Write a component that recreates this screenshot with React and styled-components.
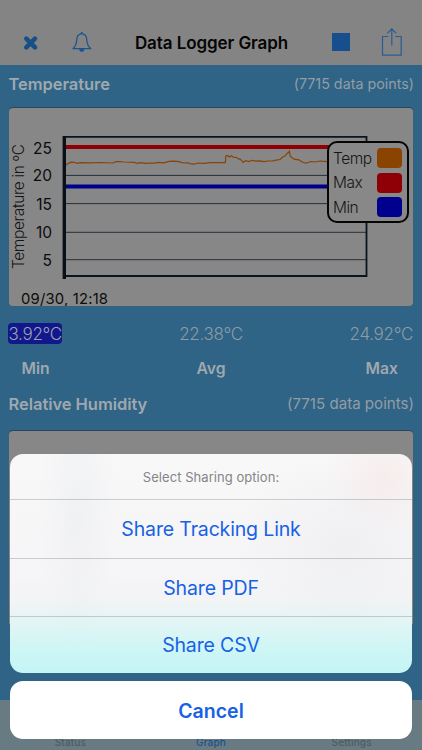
import React from "react";
import styled, { createGlobalStyle } from "styled-components";

const GlobalStyle = createGlobalStyle`
  * {
    box-sizing: border-box;
  }
  body {
    margin: 0;
    font-family: Inter, "Liberation Sans", sans-serif;
    font-feature-settings: "calt" 0;
  }
`;

const Screen = styled.div`
  position: relative;
  display: flex;
  flex-direction: column;
  width: 422px;
  height: 750px;
  overflow: hidden;
  background: #2f6486;
`;

const NavBar = styled.header`
  display: flex;
  align-items: flex-end;
  justify-content: space-between;
  height: 65px;
  padding: 0 19px 7px 22px;
  background: #848484;
`;

const NavGroup = styled.div`
  display: flex;
  align-items: center;
  gap: ${(props) => props.$gap};
  height: 30px;
`;

const NavTitle = styled.h1`
  margin: 0 2px 0 0;
  color: #050505;
  font-size: 17px;
  font-weight: 600;
  line-height: 30px;
  letter-spacing: -0.08px;
  white-space: nowrap;
`;

const StopButton = styled.div`
  width: 18px;
  height: 18px;
  margin-bottom: 2px;
  background: #164f8c;
`;

const Content = styled.main`
  flex: 1;
  padding: 0 8px;
`;

const SectionHeader = styled.div`
  display: flex;
  align-items: center;
  justify-content: space-between;
  height: ${(props) => props.$height};
  padding: 0 0 ${(props) => props.$bottom} 1px;
`;

const SectionTitle = styled.h2`
  margin: 0 0 0 -0.5px;
  color: #9fa8ae;
  font-size: 16.5px;
  font-weight: 600;
  letter-spacing: -0.05px;
`;

const PointCount = styled.span`
  margin-bottom: ${(props) => props.$lift || "0"};
  color: #929da4;
  font-size: ${(props) => props.$size};
`;

const Card = styled.div`
  position: relative;
  width: 406px;
  height: ${(props) => props.$height};
  border: 1px solid #376178;
  border-top-color: #29465a;
  border-radius: 5px;
  background: #878787;
`;

const ChartSvg = styled.svg`
  display: block;
`;

const Legend = styled.div`
  position: absolute;
  top: 33px;
  left: 318px;
  display: flex;
  flex-direction: column;
  justify-content: space-between;
  width: 82px;
  height: 82px;
  padding: 5px 5px 4px 4px;
  border: 2px solid #050505;
  border-radius: 10px;
  background: #888;
`;

const LegendRow = styled.div`
  display: flex;
  align-items: center;
  justify-content: space-between;
  height: 20px;
  color: #161616;
  font-size: 15.5px;
  font-weight: 300;
  letter-spacing: -0.5px;
`;

const Swatch = styled.span`
  width: 25px;
  height: 20px;
  border-radius: 4px;
  background: ${(props) => props.$color};
`;

const Stats = styled.div`
  display: flex;
  justify-content: space-between;
  padding-top: 16px;
`;

const Stat = styled.div`
  display: flex;
  flex-direction: column;
  align-items: ${(props) => props.$align};
  width: 100px;
`;

const StatValue = styled.span`
  height: 21px;
  padding: 0 ${(props) => (props.$marked ? "0.5px" : "1px")};
  border-radius: 4px;
  background: ${(props) => (props.$marked ? "#10188b" : "transparent")};
  color: ${(props) => (props.$marked ? "#a0a0b4" : "#8e9ba4")};
  font-size: 17px;
  font-weight: 350;
  line-height: 22px;
  letter-spacing: -0.3px;
`;

const StatLabel = styled.span`
  margin-top: 14px;
  padding: ${(props) => props.$padding || "0"};
  color: #9fa8ae;
  font-size: 15.7px;
  font-weight: 600;
  line-height: 22px;
`;

const TabBar = styled.nav`
  display: flex;
  align-items: flex-end;
  justify-content: space-around;
  height: 50px;
  padding-bottom: 1px;
  background: #687b83;
`;

const Tab = styled.span`
  width: 140px;
  color: ${(props) => (props.$active ? "#1d508a" : "#4d5b62")};
  font-size: 10px;
  font-weight: 500;
  line-height: 13px;
  letter-spacing: 0.15px;
  text-align: center;
`;

const Sheet = styled.div`
  position: absolute;
  right: 10.4px;
  bottom: 11px;
  left: 10.4px;
  display: flex;
  flex-direction: column;
  gap: 8px;
`;

const Options = styled.div`
  overflow: hidden;
  border-radius: 13px;
  background:
    radial-gradient(ellipse 60px 55px at 375px 22px, rgba(246, 218, 218, 0.35), transparent),
    radial-gradient(ellipse 110px 90px at 335px 90px, rgba(226, 228, 232, 0.35), transparent),
    radial-gradient(ellipse 40px 140px at 68px 60px, rgba(226, 230, 236, 0.35), transparent),
    linear-gradient(#f8f8f8 0, #f6f5f7 55%, #f2f4f5 67%, #e2f5f5 77%, #cdf6f5 90%, #c5f5f5 100%);
`;

const SheetTitle = styled.div`
  height: 45px;
  color: #858587;
  font-size: 13px;
  line-height: 46px;
  letter-spacing: 0.05px;
  text-align: center;
`;

const Option = styled.button`
  display: block;
  width: 100%;
  height: ${(props) => props.$height || "58px"};
  padding: 0;
  border: 0;
  border-top: 1px solid rgba(60, 80, 90, 0.25);
  background: transparent;
  color: #1761e6;
  font-family: inherit;
  font-size: 19.5px;
  line-height: ${(props) => props.$line || "56px"};
  letter-spacing: -0.15px;
`;

const Cancel = styled.button`
  height: 58px;
  padding: 0;
  border: 0;
  border-radius: 13px;
  background: #fff;
  color: #1761e6;
  font-family: inherit;
  font-size: 19.5px;
  font-weight: 600;
  line-height: 60px;
`;

const CloseIcon = () => (
  <svg width="17" height="30" viewBox="22 28 17 30">
    <path d="M26.3 38.6 L35 47.4 M35 38.6 L26.3 47.4" stroke="#194f88" strokeWidth="4.6" strokeLinecap="round" />
  </svg>
);

const BellIcon = () => (
  <svg width="22" height="30" viewBox="71 28 22 30" fill="none" stroke="#1c5490" strokeWidth="1.3">
    <path d="M73 48.6 H90.7 C87.5 46 86.9 43.3 86.7 39.5 C86.5 36 84.5 33.8 81.8 33.8 C79 33.8 77 36 76.8 39.5 C76.6 43.3 76.1 46 73 48.6 Z" strokeLinejoin="round" />
    <path d="M80.9 33.6 C81 32.2 82.7 32.2 82.8 33.6" />
    <path d="M79.2 49 H84.4 C84.4 52.8 79.2 52.8 79.2 49 Z" fill="#1c5490" stroke="none" />
  </svg>
);

const ShareIcon = () => (
  <svg width="22" height="30" viewBox="381 28 22 30" fill="none" stroke="#2a5b92" strokeWidth="1.2">
    <path d="M388.2 36.5 H382.5 V55.2 H401.2 V36.5 H395.2" />
    <path d="M391.8 45.4 V29 M387.4 33.3 L391.8 28.8 L396.2 33.3" />
  </svg>
);

const scale = [
  { label: "25", y: 147.7 },
  { label: "20", y: 175.4, line: true },
  { label: "15", y: 203.6, line: true },
  { label: "10", y: 232.3, line: true },
  { label: "5", y: 259.7, line: true },
];

const temperature =
  "66,165 68,163.5 71,162.2 74,162.3 77,163.3 80,162.7 90,162.8 100,162.5 113,163 116,161.7 120,161.5 124,162 134,162.3 137,163.3 141,162.6 145,163.3 150,163 155,163.2 158,162.4 164,162.8 169,161.4 174,161.2 179,161.7 183,163 188,162.8 190,163.6 194,164.2 198,163 204,163.3 210,162.6 225.4,162.6 225.8,156 227.5,155.5 229.5,157 231.5,155.7 233,157.2 236,157.3 238,158.7 240.5,159.3 243.3,162.4 245.5,160.7 249,161.5 252,160.3 256,161.2 260,160.8 264,161.7 268,161 273,160.8 276,160.2 280,159.5 283,156.8 285,156 287,153.5 288.3,152.6 289.3,151.2 290.3,156.3 294,159.2 299,159.8 302,162 306,163.2 311,161.5 315,162 320,161 327,161.7";

const TemperatureChart = () => (
  <ChartSvg width="404" height="198" viewBox="9 108 404 198">
    <text
      transform="translate(24 269) rotate(-90)"
      fontSize="15.5"
      fontWeight="300"
      fill="#151515"
      textLength="125"
    >
      Temperature in ºC
    </text>
    {scale.map(({ label, y, line }) => (
      <g key={label}>
        <text x="52" y={y + 6} fontSize="15.5" fill="#0c0c0c" textAnchor="end">
          {label}
        </text>
        {line && <path d={`M66 ${y}H366`} stroke="#25303a" strokeWidth="1" />}
      </g>
    ))}
    <path d="M66 136.8H366.5V276H66" fill="none" stroke="#0b151e" strokeWidth="1.8" />
    <path d="M64.3 136V279" stroke="#071016" strokeWidth="3.4" />
    <path d="M66 147H330" stroke="#8e0004" strokeWidth="4" />
    <path d="M66 186.5H330" stroke="#00008c" strokeWidth="4" />
    <polyline points={temperature} fill="none" stroke="#884408" strokeWidth="1.2" />
    <text x="21" y="303.5" fontSize="14.8" fill="#0c0c0c" textLength="87">
      09/30, 12:18
    </text>
  </ChartSvg>
);

const legend = [
  { name: "Temp", color: "#8a4300" },
  { name: "Max", color: "#8e0005" },
  { name: "Min", color: "#00008e" },
];

export default function App() {
  return (
    <>
      <GlobalStyle />
      <Screen>
        <NavBar>
          <NavGroup $gap="32px">
            <CloseIcon />
            <BellIcon />
          </NavGroup>
          <NavTitle>Data Logger Graph</NavTitle>
          <NavGroup $gap="31px">
            <StopButton />
            <ShareIcon />
          </NavGroup>
        </NavBar>

        <Content>
          <SectionHeader $height="42px" $bottom="4px">
            <SectionTitle>Temperature</SectionTitle>
            <PointCount $size="14.3px" $lift="2px">(7715 data points)</PointCount>
          </SectionHeader>
          <Card $height="200px">
            <TemperatureChart />
            <Legend>
              {legend.map(({ name, color }) => (
                <LegendRow key={name}>
                  {name}
                  <Swatch $color={color} />
                </LegendRow>
              ))}
            </Legend>
          </Card>

          <Stats>
            <Stat $align="flex-start">
              <StatValue $marked>3.92°C</StatValue>
              <StatLabel $padding="0 0 0 13.5px">Min</StatLabel>
            </Stat>
            <Stat $align="center">
              <StatValue>22.38°C</StatValue>
              <StatLabel>Avg</StatLabel>
            </Stat>
            <Stat $align="flex-end">
              <StatValue>24.92°C</StatValue>
              <StatLabel $padding="0 16px 0 0">Max</StatLabel>
            </Stat>
          </Stats>

          <SectionHeader $height="50px" $bottom="3px">
            <SectionTitle>Relative Humidity</SectionTitle>
            <PointCount $size="15.1px" $lift="1px">(7715 data points)</PointCount>
          </SectionHeader>
          <Card $height="197px" />
        </Content>

        <TabBar>
          <Tab>Status</Tab>
          <Tab $active>Graph</Tab>
          <Tab>Settings</Tab>
        </TabBar>

        <Sheet>
          <Options>
            <SheetTitle>Select Sharing option:</SheetTitle>
            <Option $height="59px" $line="58px">Share Tracking Link</Option>
            <Option>Share PDF</Option>
            <Option $height="57px">Share CSV</Option>
          </Options>
          <Cancel>Cancel</Cancel>
        </Sheet>
      </Screen>
    </>
  );
}
